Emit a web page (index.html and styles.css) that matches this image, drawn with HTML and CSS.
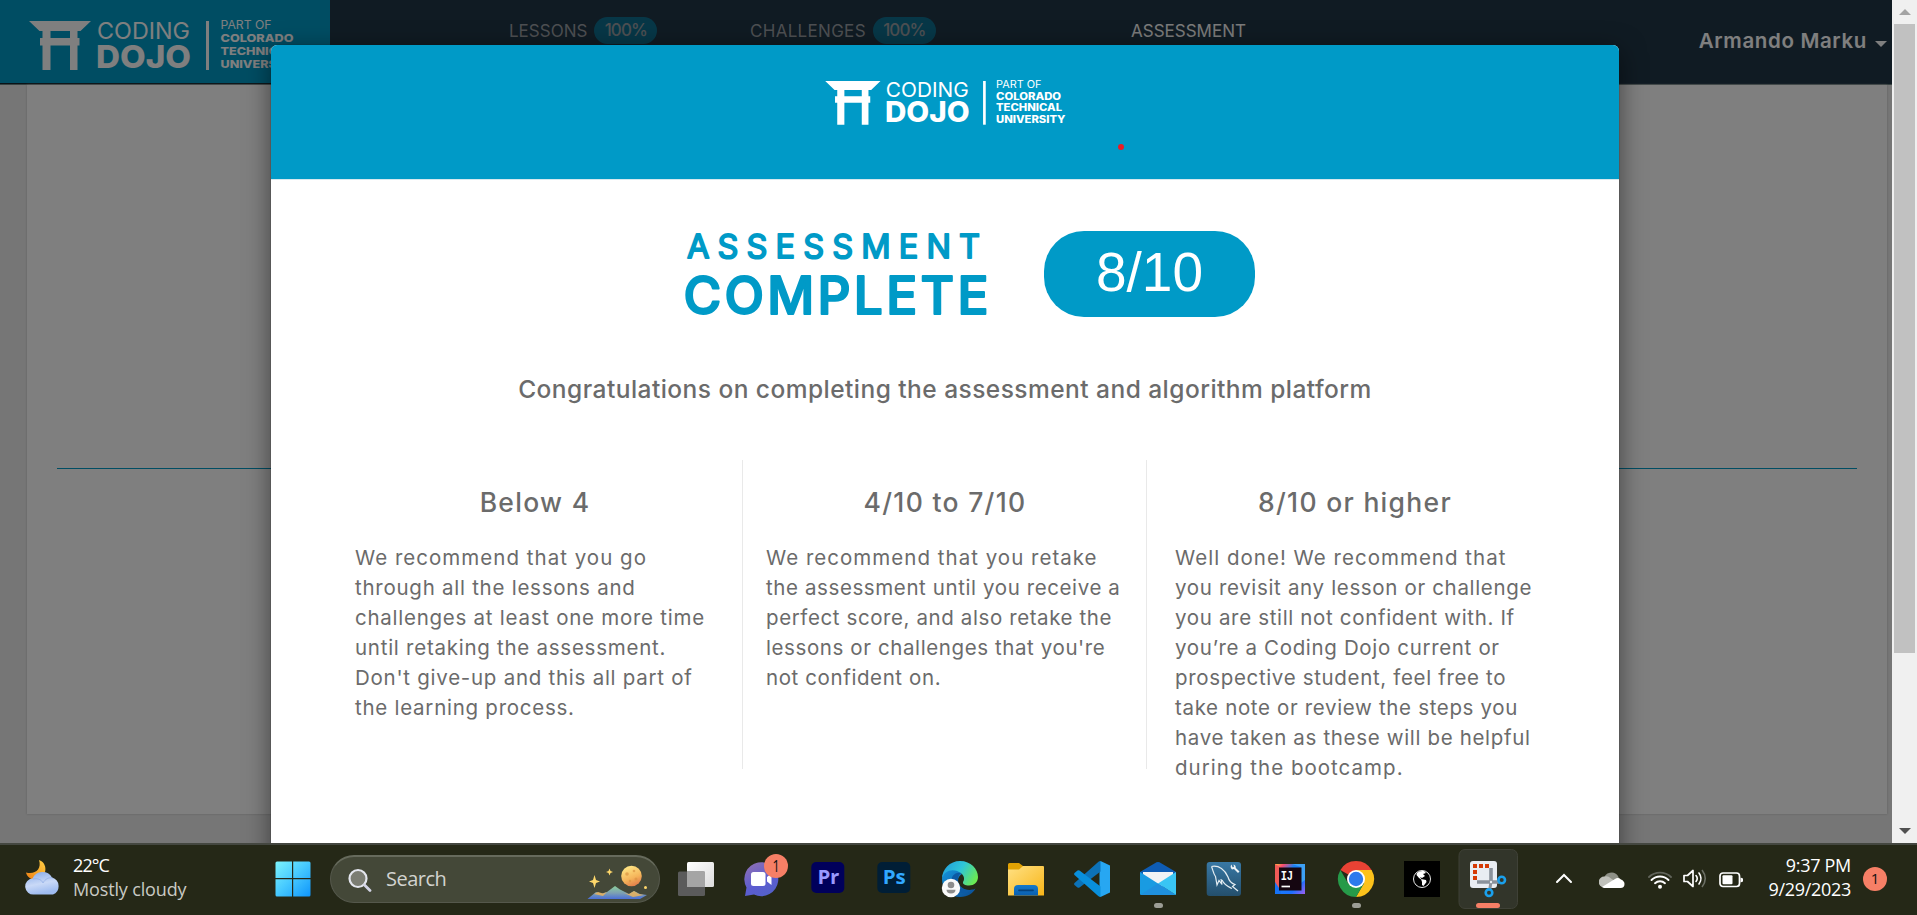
FILE: index.html
```html
<!DOCTYPE html>
<html lang="en">
<head>
<meta charset="utf-8">
<title>Coding Dojo - Assessment</title>
<link rel="stylesheet" href="styles.css">
</head>
<body>
<svg class="defs" aria-hidden="true">
  <symbol id="dojo-logo" viewBox="0 0 272 50" overflow="visible">
    <path d="M0 0H62L51.5 10H48.5V17H50.5V24.500H48.500V49H41V24.500H21.500V49H13.500V24.500H11V17H13.500V10H10.500ZM21.500 10V17H41V10Z" fill="currentColor" fill-rule="evenodd"/>
    <g fill="currentColor" font-family="Inter, sans-serif">
      <text x="68" y="18" font-size="22.500" font-weight="400" textLength="93" lengthAdjust="spacingAndGlyphs">CODING</text>
      <text x="67" y="46.500" font-size="31.500" font-weight="800" textLength="95" lengthAdjust="spacingAndGlyphs">DOJO</text>
      <rect x="177" y="0" width="3" height="49"/>
      <text x="191.500" y="8.200" font-size="11.300" font-weight="400" textLength="51" lengthAdjust="spacingAndGlyphs">PART OF</text>
      <g font-size="11" font-weight="800">
        <text x="191.500" y="20.800" textLength="73" lengthAdjust="spacingAndGlyphs">COLORADO</text>
        <text x="191.500" y="33.800" textLength="74" lengthAdjust="spacingAndGlyphs">TECHNICAL</text>
        <text x="191.500" y="46.800" textLength="78" lengthAdjust="spacingAndGlyphs">UNIVERSITY</text>
      </g>
    </g>
  </symbol>
</svg>

<div class="viewport">
  <div class="page">
    <header class="navbar">
      <div class="brand"><svg class="brand-logo"><use href="#dojo-logo"/></svg></div>
      <nav class="nav">
        <a class="nav-item lessons">LESSONS <span class="pct">100%</span></a>
        <a class="nav-item challenges">CHALLENGES <span class="pct">100%</span></a>
        <a class="nav-item active">ASSESSMENT</a>
      </nav>
      <div class="user">Armando Marku <i class="caret"></i></div>
    </header>
    <main class="panel"><hr></main>
  </div>
  <div class="scrollbar"><i class="up"></i><div class="thumb"></div><i class="down"></i></div>

  <div class="backdrop">
    <section class="modal">
      <header class="modal-head"><svg class="modal-logo"><use href="#dojo-logo"/></svg><i class="red-dot"></i></header>
      <div class="score-row">
        <svg class="title" width="310" height="90" viewBox="0 0 310 90">
          <g fill="#009ac7" stroke="#009ac7" stroke-linejoin="round" font-family="Inter, sans-serif">
            <text x="5" y="27" font-size="32.500" font-weight="400" stroke-width="1.800" textLength="293">ASSESSMENT</text>
            <text x="1.500" y="82.500" font-size="51.500" font-weight="500" stroke-width="2" textLength="305">COMPLETE</text>
          </g>
        </svg>
        <div class="score">8/10</div>
      </div>
      <h2 class="congrats">Congratulations on completing the assessment and algorithm platform</h2>
      <div class="columns">
        <article class="col one">
          <h3>Below 4</h3>
          <p><span class="wide">We recommend that you go</span><br>through all the lessons and<br>challenges at least one more time<br>until retaking the assessment.<br>Don't give-up and this all part of<br>the learning process.</p>
        </article>
        <article class="col two">
          <h3>4/10 to 7/10</h3>
          <p><span class="wide">We recommend that you retake</span><br>the assessment until you receive a<br>perfect score, and also retake the<br>lessons or challenges that you're<br>not confident on.</p>
        </article>
        <article class="col three">
          <h3>8/10 or higher</h3>
          <p><span class="wide">Well done! We recommend that</span><br>you revisit any lesson or challenge<br>you are still not confident with. If<br>you’re a Coding Dojo current or<br>prospective student, feel free to<br>take note or review the steps you<br>have taken as these will be helpful<br><span class="wide">during the bootcamp.</span></p>
        </article>
      </div>
    </section>
  </div>
</div>

<footer class="taskbar">
  <div class="weather">
    <svg width="38" height="38" viewBox="0 0 38 38">
      <defs>
        <linearGradient id="moon" x1="0" y1="1" x2="1" y2="0"><stop offset="0" stop-color="#ee7d12"/><stop offset="1" stop-color="#ffd045"/></linearGradient>
        <linearGradient id="cloud" x1="0" y1="0" x2="0.300" y2="1"><stop offset="0" stop-color="#84a8e8"/><stop offset="0.600" stop-color="#c9d9f7"/><stop offset="1" stop-color="#9fbcf0"/></linearGradient>
      </defs>
      <path d="M14 1C23 4 22.500 17 13 21C7 22 2 18 1 13.500C10 16 17 10 14 1Z" fill="url(#moon)"/>
      <path d="M9 35.500a8 8 0 0 1-1.500-16A11 11 0 0 1 27 18.500 9 9 0 0 1 28 35.500Z" fill="url(#cloud)"/>
      <path d="M8 20C13 19 17 21 18 24C20 20 24 18 28 19" fill="none" stroke="#7f9fe0" stroke-opacity="0.500"/>
    </svg>
    <div class="weather-text"><div class="temp">22°C</div><div class="cond">Mostly cloudy</div></div>
  </div>
  <svg class="start" width="36" height="36" viewBox="0 0 36 36">
    <linearGradient id="win" gradientUnits="userSpaceOnUse" x1="0" y1="0" x2="36" y2="36"><stop offset="0" stop-color="#7df5fc"/><stop offset="0.500" stop-color="#45c8ff"/><stop offset="1" stop-color="#0d93fb"/></linearGradient>
    <path d="M2 0.500H17V17H0.500V2Q0.500 0.500 2 0.500ZM18.200 0.500H34Q35.500 0.500 35.500 2V17H18.200ZM0.500 18.200H17V35.500H2Q0.500 35.500 0.500 34ZM18.200 18.200H35.500V34Q35.500 35.500 34 35.500H18.200Z" fill="url(#win)"/>
  </svg>
  <div class="search">
    <svg width="24" height="24" viewBox="0 0 24 24"><circle cx="10" cy="10.500" r="8.500" fill="#7b7d73" stroke="#e4e6ee" stroke-width="2.200"/><path d="M16.500 17L22 22.500" stroke="#d2d3e4" stroke-width="2.800" stroke-linecap="round"/></svg>
    <span>Search</span>
    <svg class="scene" width="62" height="36" viewBox="0 0 62 36">
      <defs>
        <linearGradient id="orb" x1="0.300" y1="0" x2="0.700" y2="1"><stop offset="0" stop-color="#ffe886"/><stop offset="0.600" stop-color="#f5b45a"/><stop offset="1" stop-color="#e07848"/></linearGradient>
        <linearGradient id="hills" x1="0" y1="0" x2="0" y2="1"><stop offset="0" stop-color="#8ccf9c"/><stop offset="0.550" stop-color="#7c9fb3"/><stop offset="1" stop-color="#4a6fd8"/></linearGradient>
      </defs>
      <path d="M0.500 34L9 27 15 28.500 20 27 28 21 33 24.500 38 27 42 29 47 26 53 29 60 30 53 34Z" fill="url(#hills)"/>
      <path d="M7 29L11 27 16 28.500 20 27 16 31ZM37 28L42 29 47 26 52 29 57 30 46 32Z" fill="#eab35c" opacity="0.850"/>
      <circle cx="44.500" cy="11" r="10.300" fill="url(#orb)"/>
      <g fill="#dc9442" opacity="0.700"><circle cx="40" cy="9" r="1.800"/><circle cx="47" cy="6" r="1.300"/><circle cx="49" cy="14" r="1.500"/><circle cx="43" cy="16" r="1.200"/></g>
      <g fill="#ffd86b"><path d="M7.500 10L9 15 13 16.500 9 18 7.500 23 6 18 2 16.500 6 15Z"/><path d="M22.500 3.500L23.500 6 26 7 23.500 8 22.500 10.500 21.500 8 19 7 21.500 6Z"/><circle cx="58.500" cy="22.500" r="1.500"/></g>
    </svg>
  </div>

  <div class="apps">
    <svg class="app" viewBox="0 0 66 72">
      <defs><linearGradient id="tv" x1="0" y1="0" x2="1" y2="1"><stop offset="0" stop-color="#fff"/><stop offset="1" stop-color="#dcdcdc"/></linearGradient></defs>
      <rect x="24" y="19" width="27" height="25" rx="1.500" fill="url(#tv)"/><rect x="15" y="28.500" width="27" height="24.500" rx="1.500" fill="#5b5b5b"/><path d="M24 28.500H42V44H24Z" fill="#a5a5a5"/>
    </svg>
    <svg class="app" viewBox="0 0 66 72">
      <defs><linearGradient id="chat" x1="0.200" y1="0" x2="0.700" y2="1"><stop offset="0" stop-color="#8d6fb4"/><stop offset="0.600" stop-color="#5c5cd0"/><stop offset="1" stop-color="#5361c9"/></linearGradient></defs>
      <path d="M16 53L17.500 44.500A17 17 0 1 1 25 51.500Z" fill="url(#chat)"/><rect x="22" y="29" width="14.500" height="14" rx="2.500" fill="#fff"/><path d="M38 34L42.500 30.500V42L38 38.500Z" fill="#fff"/>
      <circle cx="47" cy="23" r="12" fill="#f67f66"/><text x="43.500" y="28.700" font-family="Open Sans, sans-serif" font-size="16" textLength="7" lengthAdjust="spacingAndGlyphs" fill="#111">1</text>
    </svg>
    <svg class="app" viewBox="0 0 66 72"><rect x="16.300" y="19" width="33" height="31" rx="5" fill="#00005b"/><text x="22.500" y="41.200" font-family="Open Sans, sans-serif" font-weight="700" font-size="19.500" textLength="21.500" lengthAdjust="spacingAndGlyphs" fill="#9999ff">Pr</text></svg>
    <svg class="app" viewBox="0 0 66 72"><rect x="16.300" y="19" width="33" height="31" rx="5" fill="#001e36"/><text x="21.800" y="41.200" font-family="Open Sans, sans-serif" font-weight="700" font-size="19.500" textLength="22.500" lengthAdjust="spacingAndGlyphs" fill="#31a8ff">Ps</text></svg>
    <svg class="app" viewBox="0 0 66 72">
      <defs>
        <linearGradient id="edgeA" x1="0" y1="0.200" x2="1" y2="0.600"><stop offset="0" stop-color="#229fdc"/><stop offset="0.500" stop-color="#2fc6d8"/><stop offset="1" stop-color="#6bea52"/></linearGradient>
        <linearGradient id="edgeB" x1="0" y1="0" x2="1" y2="1"><stop offset="0" stop-color="#1595dd"/><stop offset="1" stop-color="#0b4a90"/></linearGradient>
      </defs>
      <path d="M15 36A18 18 0 0 0 33 54C41 54 46 50 48.500 45.500C46 47 43 47.500 40 47C34 46 31 42 31 38C31 34 33 32 35 31C32 26 25 25 21 27C17 29 15 32 15 36Z" fill="url(#edgeB)"/>
      <path d="M15 36C15 26 23 18 33 18C44 18 51 26 51 34C51 39 47 42.500 42 42.500C38 42.500 35.500 41 36 39C38 36 37 33 34.500 30.500C28 25 17 26 15 36Z" fill="url(#edgeA)"/>
      <path d="M24 40C24 33 28 28.500 34 30C31 32 30 37 32 41C34 45 39 48 46 46.500C41 51 33 51 29 48C26 46 24 43 24 40Z" fill="#0c5aa5"/>
      <circle cx="24" cy="45" r="9.200" fill="#fafafa"/><circle cx="24" cy="42" r="3.300" fill="#8c8c8c"/><path d="M19.500 46.800H28.500Q28.500 50.500 24 50.500T19.500 46.800Z" fill="#8c8c8c"/>
    </svg>
    <svg class="app" viewBox="0 0 66 72">
      <defs><linearGradient id="fold" x1="0" y1="0" x2="1" y2="1"><stop offset="0" stop-color="#ffe184"/><stop offset="1" stop-color="#f8b518"/></linearGradient><linearGradient id="foldTab" x1="0" y1="0" x2="0" y2="1"><stop offset="0" stop-color="#1479cc"/><stop offset="1" stop-color="#0a5fae"/></linearGradient></defs>
      <path d="M15 21.500Q15 20 16.500 20H26L30 23H50V32H15Z" fill="#e1a204"/><path d="M15 26.500H26L30 23H50Q51 23 51 24V52.500H15Z" fill="url(#fold)"/><path d="M21 52.500V46Q21 42 25 42H41Q45 42 45 46V52.500Z" fill="url(#foldTab)"/><path d="M26 47.300H40" stroke="#04427d" stroke-width="1.700" stroke-linecap="round"/>
    </svg>
    <svg class="app" viewBox="0 0 66 72">
      <path d="M41.500 18L51 22.500V49.500L41.500 54 40.500 53V19Z" fill="#27a7f2"/><path d="M41.500 18V28.500L20.500 44.500Q19.500 45.200 18.500 44.500L15.500 42Q14.500 41 15.500 40L39.500 18.800Q40.500 18 41.500 18Z" fill="#0c72b8"/><path d="M41.500 54V43.500L20.500 27.500Q19.500 26.800 18.500 27.500L15.500 30Q14.500 31 15.500 32L39.500 53.200Q40.500 54 41.500 54Z" fill="#098fdc"/>
    </svg>
    <svg class="app" viewBox="0 0 66 72">
      <path d="M15 29L31.500 19.300Q33 18.500 34.500 19.300L51 29V40H15Z" fill="#0e5cb4"/><path d="M18 29H48V38L33 46 18 38Z" fill="#f1f3f5"/><path d="M15 29L33 40.500 51 52H16.500Q15 52 15 50.500Z" fill="#199be2"/><path d="M51 29V52L33 40.500Z" fill="#39c5f4"/><path d="M15 52L33 40.500 51 52Z" fill="#1f90de"/><rect x="29" y="60" width="9" height="5" rx="2.500" fill="#9c9d95"/>
    </svg>
    <svg class="app" viewBox="0 0 66 72">
      <defs><linearGradient id="sql" x1="0" y1="0" x2="0" y2="1"><stop offset="0" stop-color="#3878a5"/><stop offset="1" stop-color="#244f6c"/></linearGradient></defs>
      <rect x="15.700" y="19" width="34.300" height="34" rx="3" fill="url(#sql)"/>
      <path d="M20.500 23.500C28 22 34 27 37 34C38 38 39.500 40 44 41.500L41.500 43.500 47 48M20.500 23.500C22 27 22 30 24.500 33.500L26 42 28 37.500 31 41.500 30 36M31 37C34 43 38 44 41 45.500" fill="none" stroke="#e4edf2" stroke-width="1.200"/>
      <path d="M40.500 21.500Q38.500 24 41 26.500L43 26 47 30 48.500 28.500 44.800 25Q45 22 42.500 21.500L43 24 41.500 24.300Z" fill="#eef3f6"/>
    </svg>
    <svg class="app" viewBox="0 0 66 72">
      <defs><linearGradient id="ij" x1="0" y1="0" x2="1" y2="1"><stop offset="0" stop-color="#ffc13b"/><stop offset="0.150" stop-color="#fb4c6f"/><stop offset="0.350" stop-color="#1882f7"/><stop offset="0.750" stop-color="#1c70ff"/><stop offset="1" stop-color="#a05ef0"/></linearGradient></defs>
      <rect x="18" y="21" width="30" height="30" fill="url(#ij)"/><path d="M18 21L23 24V48L18 40Z" fill="#f05a57"/><path d="M18 39L24 48V51H18Z" fill="#1673f6"/><path d="M35 21H48V37L44 40V24Z" fill="#3da0f5"/><rect x="22" y="24.500" width="22.500" height="23" fill="#150611"/><text x="23.800" y="36.500" font-family="Liberation Mono, monospace" font-weight="700" font-size="12.500" textLength="12" lengthAdjust="spacingAndGlyphs" fill="#fff">IJ</text><path d="M24.500 43.500H33" stroke="#fff" stroke-width="1.700"/>
    </svg>
    <svg class="app" viewBox="0 0 66 72">
      <path d="M33 36L17.400 27A18 18 0 0 1 48.600 27Z" fill="#e94234"/><path d="M33 27H48.600A18 18 0 0 1 33 54L40.800 40.500Z" fill="#fcc21b"/><path d="M17.400 27A18 18 0 0 0 33 54L40.800 40.500 33 36 25.200 40.500Z" fill="#269a49"/><circle cx="33" cy="36" r="9" fill="#fff"/><circle cx="33" cy="36" r="7.200" fill="#2c7aec"/><rect x="29" y="60" width="9" height="5" rx="2.500" fill="#9c9d95"/>
    </svg>
    <svg class="app" viewBox="0 0 66 72">
      <rect x="15" y="18" width="36" height="36" fill="#000"/><circle cx="33" cy="36" r="8.500" fill="#000" stroke="#fff" stroke-width="0.900"/><path d="M28 30Q30 27.500 35 28L37 30 34 31 36 33 33 35 31 34 33 37 30 35 27.500 32ZM32 36L37 37 37.500 39 34.500 43 33 42 33 39Z" fill="#fff"/>
    </svg>
    <svg class="app" viewBox="0 0 66 72">
      <rect x="4" y="6.500" width="58.500" height="59" rx="6" fill="#32352a" stroke="#3f4137"/><rect x="15" y="18" width="27" height="27" rx="3" fill="#e9edf2"/>
      <path d="M18 21H22V25H18ZM24 21H28V25H24ZM30 21H34V25H30ZM18 27H22V31H18ZM18 33H22V37H18Z" fill="#d63a05"/>
      <path d="M36 25V39M22 39H44" fill="none" stroke="#8a929b" stroke-width="3.600"/><path d="M36 39L34.800 46" stroke="#8a929b" stroke-width="3"/><circle cx="36" cy="39" r="1.200" fill="#e9edf2"/>
      <g fill="none" stroke="#1aa0ec" stroke-width="2.600"><circle cx="46.700" cy="37" r="3.300"/><circle cx="34" cy="49.700" r="3.300"/></g><rect x="21" y="60" width="24" height="5" rx="2.500" fill="#f67f66"/>
    </svg>
  </div>

  <div class="tray">
    <svg class="chevron" width="18" height="12" viewBox="0 0 18 12"><path d="M2 10L9 3L16 10" fill="none" stroke="#fff" stroke-width="2" stroke-linecap="round"/></svg>
    <svg class="onedrive" width="26" height="18" viewBox="0 0 26 18"><path d="M5 8A7.500 7 0 0 1 19 5L22 12H5Z" fill="#8e9087"/><path d="M5 16.500A5.200 5.200 0 0 1 5.500 5.500Q9 4.500 12 7.500L20 13 12 16.500Z" fill="#bfc0ba"/><path d="M3 16L16 8Q19 6 22 8.500 25.500 10 25.500 13A4 4 0 0 1 21.500 17H5Z" fill="#fff"/></svg>
    <svg class="wifi" width="26" height="20" viewBox="0 0 26 20"><g fill="none" stroke-linecap="round" stroke-width="1.900"><path d="M2 7A16 16 0 0 1 24 7" stroke="#61645a"/><path d="M4.500 10A12 12 0 0 1 21.500 10M8 13.200A7.500 7.500 0 0 1 18 13.200" stroke="#fff"/></g><circle cx="13" cy="16.800" r="2" fill="#fff"/></svg>
    <svg class="sound" width="26" height="22" viewBox="0 0 26 22"><path d="M2 7.500H5.500L11 2.500V18.500L5.500 13.500H2Z" fill="none" stroke="#fff" stroke-width="1.700" stroke-linejoin="round"/><path d="M14 7.500Q16.500 10.500 14 13.500M17 5Q21 10.500 17 16" fill="none" stroke="#fff" stroke-width="1.600" stroke-linecap="round"/><path d="M20 2Q26.500 10.500 20 19" fill="none" stroke="#6c6f65" stroke-width="1.600"/></svg>
    <svg class="battery" width="26" height="18" viewBox="0 0 26 18"><rect x="2" y="2" width="19.500" height="13.500" rx="3" fill="none" stroke="#fff" stroke-width="1.700"/><rect x="4.500" y="4.300" width="10" height="9" rx="1" fill="#fff"/><path d="M22.500 6.500L25 7.500V10.500L22.500 11.500Z" fill="#fff"/></svg>
    <div class="clock"><div>9:37 PM</div><div>9/29/2023</div></div>
    <div class="note">1</div>
  </div>
</footer>
</body>
</html>
```

FILE: styles.css
```css
* { box-sizing: border-box; }

body {
  margin: 0;
  width: 1917px;
  height: 915px;
  overflow: hidden;
  display: flex;
  flex-direction: column;
  font-family: Inter, sans-serif;
}

.defs { position: absolute; width: 0; height: 0; }

.viewport { position: relative; display: flex; height: 843px; overflow: hidden; }
.page { flex: 1; background: #ececec; display: flex; flex-direction: column; }

/* Top navigation */
.navbar { display: flex; height: 85px; background: #213646; border-bottom: 1px solid #6d8483; }
.brand { width: 330px; padding: 21px 0 0 29px; background: #009ac7; border-bottom: 1px solid #14242e; }
.brand-logo { display: block; width: 272px; height: 50px; color: #fff; overflow: visible; }
.nav { display: flex; flex: 1; padding: 17px 0 0 179px; font-size: 17px; line-height: 28px; color: #9a9fa4; }
.nav-item { display: flex; }
.lessons { width: 241px; }
.challenges { width: 381px; letter-spacing: 0.3px; }
.nav-item.active { color: #f4f4f4; }
.pct {
  height: 27px;
  width: 63px;
  margin-left: 7px;
  border-radius: 14px;
  background: #0f6f8f;
  text-align: center;
  font-weight: 500;
  line-height: 26px;
  letter-spacing: -0.9px;
}
.user {
  display: flex;
  align-items: center;
  padding: 0 5px 3px 0;
  gap: 8px;
  color: #fff;
  font-size: 20.5px;
  font-weight: 600;
  letter-spacing: 0.650px;
}
.caret { margin-top: 7px; border: 6px solid transparent; border-top-color: #fff; border-bottom: 0; }

.panel { width: 1860px; height: 729px; margin-left: 27px; padding: 383px 30px 0; background: #fff; box-shadow: 0 0 2px #bbb; }
.panel hr { margin: 0; border: 0; height: 1px; background: #009ac7; }

/* Browser scrollbar */
.scrollbar { position: relative; z-index: 2; width: 25px; background: #f0f0f0; display: flex; flex-direction: column; align-items: center; padding: 9px 0; }
.thumb { width: 21px; height: 629px; margin-top: 9px; background: #c1c1c1; }
.up { border: 6px solid transparent; border-top: 0; border-bottom-color: #a3a3a3; }
.down { margin-top: auto; border: 6px solid transparent; border-bottom: 0; border-top-color: #505050; }

/* Modal dialog over the page */
.backdrop { position: absolute; inset: 0 25px 0 0; padding: 45px 0 0 271px; background: rgba(0, 0, 0, 0.5); }
.modal { width: 1348px; height: 840px; overflow: visible; border-radius: 6px; background: #fff; box-shadow: 0 6px 26px rgba(0, 0, 0, 0.5), 0 0 1px #222; color: #6b6b6b; }
.modal-head { position: relative; height: 135px; padding: 36px 0 0 554px; border-radius: 6px 6px 0 0; border-bottom: 1px solid #d5e8ee; background: #009ac7; color: #fff; }
.modal-logo { display: block; width: 243px; height: 44.600px; overflow: visible; }
.red-dot { position: absolute; left: 847px; top: 99px; width: 6px; height: 6px; border-radius: 50%; background: #ea1c24; }

.score-row { display: flex; padding: 51px 0 0 411px; height: 137px; gap: 52px; }
.score {
  width: 211px;
  height: 86px;
  border-radius: 40px;
  background: #009ac7;
  color: #fff;
  font: 55px/83px "Liberation Sans", Arial, sans-serif;
  text-align: center;
}
.congrats { margin: 57px 0 0; text-align: center; font-size: 24.5px; line-height: 30px; font-weight: 500; letter-spacing: 0.460px; }

.columns { display: flex; margin-top: 56px; height: 309px; white-space: nowrap; }
.col { border-right: 1px solid #e9e9e9; padding-top: 26px; }
.col h3 { margin: 0 0 25px; font-size: 26.5px; line-height: 32px; font-weight: 500; letter-spacing: 1.300px; text-align: center; }
.col p { margin: 0; font-size: 20.5px; line-height: 30px; letter-spacing: 0.660px; }
.one p { letter-spacing: 0.740px; }
.two p { letter-spacing: 0.600px; }
.col .wide { letter-spacing: 1.020px; }
.one { width: 472px; padding-left: 84px; }
.one h3 { width: 360px; }
.two { width: 404px; padding-left: 23px; }
.two h3 { width: 358px; }
.three { border-right: 0; padding-left: 28px; }
.three h3 { width: 360px; }

/* Windows taskbar */
.taskbar { display: flex; height: 72px; background: #252817; border-top: 2px solid #444740; color: #fff; font-family: "Open Sans", sans-serif; font-size: 18px; letter-spacing: -0.300px; }
.weather { display: flex; width: 275px; padding: 14px 0 0 25px; gap: 10px; }
.weather-text, .clock { line-height: 24px; margin-top: -6px; }
.temp { letter-spacing: -0.900px; }
.cond { color: #c9cac4; letter-spacing: -0.150px; }
.start { margin-top: 16px; width: 36px; }
.search {
  display: flex;
  width: 330px;
  height: 48px;
  margin: 10px 0 0 19px;
  padding: 11px 10px 0 17px;
  border: 1px solid #55584c;
  border-top: 2px solid #666a5c;
  border-radius: 24px;
  background: #444838;
  color: #d2d3cf;
  font-size: 20px;
  line-height: 22px;
  letter-spacing: -0.500px;
}
.search span { margin-left: 14px; }
.search .scene { margin: -3px 0 0 auto; }
.apps { display: flex; margin: -2px 0 0 3px; }
.app { width: 66px; height: 72px; }
.tray { display: flex; flex: 1; padding-left: 34px; }
.tray svg { flex: none; }
.chevron { margin-top: 27px; }
.onedrive { margin: 26px 0 0 26px; }
.wifi { margin: 25px 0 0 22px; }
.sound { margin: 23px 0 0 9px; }
.battery { margin: 26px 0 0 10px; }
.clock { width: 107px; margin-top: 8px; text-align: right; }
.note { width: 24px; height: 24px; margin: 22px 0 0 12px; border-radius: 50%; background: #f67f66; color: #111; text-align: center; font-size: 15px; line-height: 23px; }
```
